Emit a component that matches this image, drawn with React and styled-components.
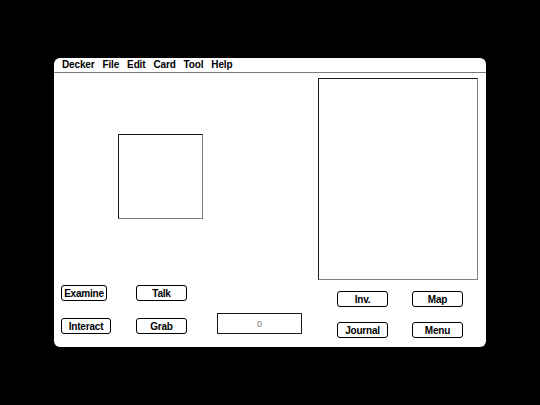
import React from "react";
import styled, { createGlobalStyle } from "styled-components";

const GlobalStyle = createGlobalStyle`
  html, body {
    margin: 0;
    padding: 0;
    background: #000;
    height: 100%;
  }
  body {
    font-family: "Liberation Sans", Arial, sans-serif;
  }
`;

const Page = styled.div`
  width: 540px;
  height: 405px;
  background: #000;
  padding: 58px 0 0 54px;
  box-sizing: border-box;
`;

const Screen = styled.div`
  width: 432px;
  height: 289px;
  background: #fff;
  border-radius: 6px;
  overflow: hidden;
  display: flex;
  flex-direction: column;
`;

const MenuBar = styled.div`
  height: 14px;
  border-bottom: 1px solid #7a7a7a;
  display: flex;
  align-items: center;
  gap: 8px;
  padding-left: 8px;
  font-size: 10px;
  font-weight: bold;
  letter-spacing: -0.15px;
  color: #000;
`;

const MenuItem = styled.span`
  line-height: 14px;
`;

const Card = styled.div`
  flex: 1;
  display: flex;
`;

const LeftPane = styled.div`
  width: 264px;
  display: flex;
  flex-direction: column;
  padding-bottom: 13px;
  box-sizing: border-box;
`;

const Frame = styled.div`
  box-sizing: border-box;
  background: #fff;
  border-style: solid;
  border-width: 1px;
  border-color: #1a1a1a #808080 #808080 #1a1a1a;
  width: ${(p) => p.$w}px;
  height: ${(p) => p.$h}px;
`;

const Square = styled(Frame)`
  margin: 61px 0 0 64px;
`;

const LeftGrid = styled.div`
  margin-top: auto;
  padding-left: 7px;
  display: grid;
  grid-template-columns: 50px 51px 90px;
  column-gap: 25px;
  row-gap: 12px;
  align-items: end;
`;

const Button = styled.div`
  box-sizing: border-box;
  width: ${(p) => p.$w || 51}px;
  height: 16px;
  border: 1px solid #000;
  border-radius: 3px;
  background: #fff;
  display: flex;
  align-items: center;
  justify-content: center;
  font-size: 10px;
  font-weight: bold;
  letter-spacing: -0.2px;
  color: #000;
`;

const Field = styled.div`
  box-sizing: border-box;
  justify-self: end;
  width: 85px;
  height: 21px;
  border: 1px solid #1a1a1a;
  display: flex;
  align-items: center;
  justify-content: center;
  font-size: 9px;
  color: #777;
`;

const RightPane = styled.div`
  width: 160px;
  display: flex;
  flex-direction: column;
  padding: 5px 0 9px;
  box-sizing: border-box;
`;

const RightGrid = styled.div`
  margin-top: auto;
  padding-left: 19px;
  display: grid;
  grid-template-columns: 51px 51px;
  column-gap: 24px;
  row-gap: 15px;
`;

const menus = ["Decker", "File", "Edit", "Card", "Tool", "Help"];

export default function App() {
  return (
    <>
      <GlobalStyle />
      <Page>
        <Screen>
          <MenuBar>
            {menus.map((m) => (
              <MenuItem key={m}>{m}</MenuItem>
            ))}
          </MenuBar>
          <Card>
            <LeftPane>
              <Square $w={85} $h={85} />
              <LeftGrid>
                <Button $w={46}>Examine</Button>
                <Button>Talk</Button>
                <span />
                <Button $w={50}>Interact</Button>
                <Button>Grab</Button>
                <Field>0</Field>
              </LeftGrid>
            </LeftPane>
            <RightPane>
              <Frame $w={160} $h={202} />
              <RightGrid>
                <Button>Inv.</Button>
                <Button>Map</Button>
                <Button>Journal</Button>
                <Button>Menu</Button>
              </RightGrid>
            </RightPane>
          </Card>
        </Screen>
      </Page>
    </>
  );
}
